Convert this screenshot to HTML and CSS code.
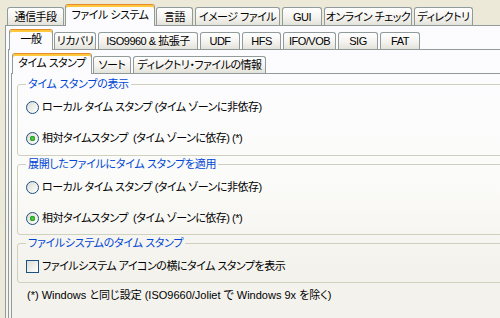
FILE: index.html
```html
<!DOCTYPE html>
<html lang="ja">
<head>
  <meta charset="UTF-8">
  <title>ファイル システム</title>
  <link rel="stylesheet" href="styles.css">
</head>
<body>
  <div class="tabs top">
    <div class="strip main">
      <span class="tab">通信手段</span>
      <span class="tab on">ファイル システム</span>
      <span class="tab">言語</span>
      <span class="tab">イメージ ファイル</span>
      <span class="tab">GUI</span>
      <span class="tab">オンライン チェック</span>
      <span class="tab">ディレクトリ</span>
    </div>
    <div class="panel">
      <div class="tabs">
        <div class="strip fs">
          <span class="tab on">一般</span>
          <span class="tab">リカバリ</span>
          <span class="tab">ISO9960 &amp; 拡張子</span>
          <span class="tab">UDF</span>
          <span class="tab">HFS</span>
          <span class="tab">IFO/VOB</span>
          <span class="tab">SIG</span>
          <span class="tab">FAT</span>
        </div>
        <div class="panel">
          <div class="tabs">
            <div class="strip general">
              <span class="tab on">タイム スタンプ</span>
              <span class="tab">ソート</span>
              <span class="tab">ディレクトリ・ファイルの情報</span>
            </div>
            <div class="panel page">
              <fieldset class="group">
                <legend>タイム スタンプの表示</legend>
                <label class="opt"><input type="radio" name="show"> ローカル タイム スタンプ (タイム ゾーンに非依存)</label>
                <label class="opt"><input type="radio" name="show" checked> 相対タイムスタンプ &nbsp;(タイム ゾーンに依存) (*)</label>
              </fieldset>
              <fieldset class="group">
                <legend>展開したファイルにタイム スタンプを適用</legend>
                <label class="opt"><input type="radio" name="apply"> ローカル タイム スタンプ (タイム ゾーンに非依存)</label>
                <label class="opt"><input type="radio" name="apply" checked> 相対タイムスタンプ &nbsp;(タイム ゾーンに依存) (*)</label>
              </fieldset>
              <fieldset class="group">
                <legend>ファイルシステムのタイム スタンプ</legend>
                <label class="opt"><input type="checkbox"> ファイルシステム アイコンの横にタイム スタンプを表示</label>
              </fieldset>
              <p class="note">(*) Windows と同じ設定 (ISO9660/Joliet で Windows 9x を除く)</p>
            </div>
          </div>
        </div>
      </div>
    </div>
  </div>
</body>
</html>
```

FILE: styles.css
```css
* {
  margin: 0;
  padding: 0;
  box-sizing: border-box;
}

html, body {
  overflow: hidden;
}

body {
  width: 500px;
  height: 318px;
  background-color: #ece9d8;
  color: #000000;
  font-family: "Liberation Sans", "Noto Sans CJK JP", sans-serif;
  font-size: 11px;
  line-height: 16px;
  letter-spacing: -0.3px;
  font-feature-settings: "palt";
}

.tabs {
  display: flex;
  flex-direction: column;
  flex: 1;
}

.top {
  width: 540px;
  height: 340px;
}

/* tab strips: one column per tab */
.strip {
  display: grid;
  grid-auto-flow: column;
  justify-content: start;
  align-items: end;
  column-gap: 2px;
  height: 23px;
  padding-left: 2px;
}

.strip.main {
  grid-template-columns: 57px 88px 37px 85px 40px 88px 59px;
  height: 25px;
  padding-left: 7px;
}

.strip.fs {
  grid-template-columns: 42px 42px 100px 40px 39px 53px 40px 40px;
  padding-left: 2px;
}

.strip.general {
  grid-template-columns: 78px 38px 133px;
}

.tab {
  display: flex;
  align-items: center;
  justify-content: center;
  height: 17px;
  border: 1px solid #919b9c;
  border-bottom: none;
  border-radius: 3px 3px 0 0;
  background: linear-gradient(#ffffff, #f4f3ef 55%, #e3e2da);
  letter-spacing: -0.5px;
  white-space: nowrap;
}

.main > .tab {
  height: 18px;
}

.tab.on {
  position: relative;
  z-index: 1;
  height: 21px;
  margin: 0 -1px -1px -1px;
  padding-bottom: 2px;
  border-top-color: #e68b2c;
  box-shadow: inset 0 2px 0 #ffc73c;
  background: #fcfcfe;
}

.main > .tab.on {
  height: 22px;
}

.panel {
  display: flex;
  flex-direction: column;
  flex: 1;
  padding-left: 2px;
  border: 1px solid #919b9c;
  background: linear-gradient(#fcfcfe, #f4f3ee);
}

.top > .panel {
  margin-left: 5px;
}

.page {
  display: block;
  padding: 2px 0 0 5px;
  background: linear-gradient(#fcfcfe, #fbfbf9 40%, #f3f2ec 75%);
}

.group {
  display: flex;
  flex-direction: column;
  gap: 15px;
  padding: 7px 0 8px 8px;
  border: 1px solid #d0d0bf;
  border-radius: 3px;
}

.group:first-of-type {
  padding-bottom: 9px;
}

.group legend {
  padding: 0 2px;
  color: #0046d5;
}

.opt {
  display: flex;
  align-items: center;
  gap: 3px;
  height: 16px;
  letter-spacing: -0.5px;
  white-space: nowrap;
}

.opt input {
  appearance: none;
  flex: none;
  width: 13px;
  height: 13px;
  border: 1px solid #1c5180;
  background: linear-gradient(135deg, #dcdcd5, #ffffff);
}

.opt input[type="radio"] {
  border-radius: 50%;
}

.opt input[type="radio"]:checked {
  background: radial-gradient(circle, #5ad44c 0, #2b9d26 2.5px, transparent 3px),
    linear-gradient(135deg, #dcdcd5, #ffffff);
}

.note {
  padding: 4px 0 0 10px;
  letter-spacing: 0;
}
```
